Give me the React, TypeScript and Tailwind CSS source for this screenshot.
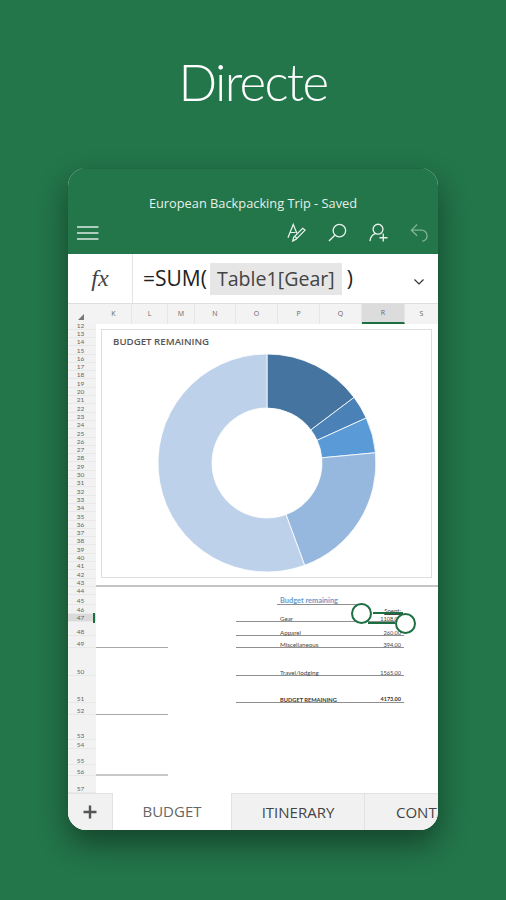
const SANS = "font-['Open_Sans',sans-serif]";

function polar(r: number, deg: number): string {
  const a = ((deg - 90) * Math.PI) / 180;
  return `${(110 + r * Math.cos(a)).toFixed(2)} ${(110 + r * Math.sin(a)).toFixed(2)}`;
}

function slicePath(from: number, to: number): string {
  const large = to - from > 180 ? 1 : 0;
  return `M${polar(109, from)} A109 109 0 ${large} 1 ${polar(109, to)} L${polar(55, to)} A55 55 0 ${large} 0 ${polar(55, from)} Z`;
}

const slices = [
  { from: 0, to: 53, color: "#44749f" },
  { from: 53, to: 65.6, color: "#4a81b7" },
  { from: 65.6, to: 84.6, color: "#5a9ad6" },
  { from: 84.6, to: 159.8, color: "#97b8de" },
  { from: 159.8, to: 360, color: "#bdd1ea" },
];

const columns = [
  { label: "K", w: "w-[36px]" },
  { label: "L", w: "w-[36px]" },
  { label: "M", w: "w-[27px]" },
  { label: "N", w: "w-[41px]" },
  { label: "O", w: "w-[42px]" },
  { label: "P", w: "w-[42px]" },
  { label: "Q", w: "w-[42px]" },
  { label: "R", w: "w-[43px]", selected: true },
  { label: "S", w: "w-[34px]" },
];

const chartRows = Array.from({ length: 32 }, (_, i) => String(i + 13));

const lowerRows = [
  { n: "45", h: "h-[10px]" },
  { n: "46", h: "h-[9px]" },
  { n: "47", h: "h-[8px]", selected: true },
  { n: "48", h: "h-[14px]" },
  { n: "49", h: "h-[12px]" },
  { n: "50", h: "h-[28px]" },
  { n: "51", h: "h-[27px]" },
  { n: "52", h: "h-[12px]" },
  { n: "53", h: "h-[25px]" },
  { n: "54", h: "h-[9px]" },
  { n: "55", h: "h-[16px]" },
  { n: "56", h: "h-[11px]" },
  { n: "57", h: "h-[17px]" },
];

function RowNumber({ n, h, selected }: { n: string; h: string; selected?: boolean }) {
  return (
    <div
      className={`${h} flex items-end justify-center border-b border-[#e8e8e8] pr-[3px] text-[6.5px] leading-[6px] text-[#666] ${
        selected ? "bg-[#dadada]" : "bg-[#f2f2f2]"
      }`}
    >
      {n}
    </div>
  );
}

function SheetRow({
  h,
  left,
  thick,
  label,
  value,
  bold,
}: {
  h: string;
  left?: boolean;
  thick?: boolean;
  label?: string;
  value?: string;
  bold?: boolean;
}) {
  return (
    <div className={`${h} flex shrink-0 font-['Lato',sans-serif] leading-[5px] text-[#444]`}>
      <div className={`w-[72px] ${left ? (thick ? "border-b-2 border-[#c8c8c8]" : "border-b border-[#a8a8a8]") : ""}`} />
      <div className="w-[68px]" />
      <div
        className={`flex w-[168px] items-end justify-between pr-[3px] pl-[44px] ${label ? "border-b border-[#8f8f8f]" : ""} ${
          bold ? "text-[5.7px] font-bold text-[#333]" : "text-[6.2px]"
        }`}
      >
        <span>{label}</span>
        <span className={bold ? "text-[5.5px]" : "text-[5.6px]"}>{value}</span>
      </div>
    </div>
  );
}

export default function App() {
  return (
    <div className={`flex min-h-[900px] flex-col items-center bg-[#23754a] ${SANS}`}>
      <h1 className="mt-[47px] font-['Lato',sans-serif] text-[51px] leading-[70px] font-light tracking-[-1.7px] text-white">Directe</h1>

      <div className="mt-[51px] flex h-[662px] w-[370px] flex-col overflow-hidden rounded-[18px] bg-white shadow-[0_14px_30px_rgba(0,0,0,0.42)]">
        <header className="flex h-[86px] shrink-0 flex-col border-t border-[#1d6a41] bg-[#23754a]">
          <div className="mt-[26px] text-center text-[12.8px] leading-[17px] text-[#e3f1e9]">
            European Backpacking Trip - Saved
          </div>
          <div className="mt-[11px] flex items-center pr-[9px] pl-[9px]">
            <svg width="22" height="16" viewBox="0 0 22 16" fill="none" stroke="#dcece3" strokeWidth="1.3">
              <path d="M0 2H21.5M0 8H21.5M0 14H21.5" />
            </svg>
            <div className="ml-auto flex items-center gap-[22px]">
              <svg width="19" height="19" viewBox="0 0 20 20" fill="none" stroke="#e8f3ed" strokeWidth="1.3">
                <path d="M1 15.5 6.6 1.5 10.5 11M3.3 10H9" />
                <path d="M16.5 5.5 19 7.5 9.6 17 6 19 7 15.2ZM8 14l2.5 2" />
              </svg>
              <svg width="19" height="19" viewBox="0 0 20 20" fill="none" stroke="#e8f3ed" strokeWidth="1.4">
                <circle cx="12" cy="8" r="6.6" />
                <path d="M7.2 12.8 1 19" />
              </svg>
              <svg width="19" height="19" viewBox="0 0 20 20" fill="none" stroke="#e8f3ed" strokeWidth="1.4">
                <circle cx="9.5" cy="6.5" r="5.2" />
                <path d="M1 19c.4-3.5 2.6-6.5 5.5-7.7M11 15.5h8.5M15 11v8.5" />
              </svg>
              <svg width="19" height="19" viewBox="0 0 20 20" fill="none" stroke="#7fb398" strokeWidth="1.4">
                <path d="M7.5 1.5 1.5 7.5 7.5 13.5M1.5 7.5H12a6 6 0 0 1 6 6c0 3-2 5.2-5 5.7" />
              </svg>
            </div>
          </div>
        </header>

        <div className="flex h-[50px] shrink-0 items-center border-b border-[#dedede] bg-white">
          <div className="flex h-full w-[65px] shrink-0 items-center justify-center border-r border-[#e4e4e4] pb-[2px] font-['Liberation_Serif',serif] text-[24px] text-[#444] italic">
            fx
          </div>
          <div className="ml-[10px] flex items-center text-[21px] text-[#222]">
            <span>=SUM(</span>
            <span className="mr-[5px] ml-[3px] flex h-[32px] items-center bg-[#e6e6e6] px-[7px] text-[19.6px] text-[#444]">Table1[Gear]</span>
            <span>)</span>
          </div>
          <svg className="mt-[6px] ml-auto mr-[14px]" width="10" height="6" viewBox="0 0 10 6" fill="none" stroke="#333" strokeWidth="1.2">
            <path d="M.5.5 5 5 9.5.5" />
          </svg>
        </div>

        <div className="flex h-[20px] shrink-0 bg-[#f3f3f3]">
          <div className="flex w-[28px] shrink-0 items-end justify-center pb-[4px] pr-[3px]">
            <svg width="6" height="6" viewBox="0 0 6 6" fill="#777">
              <path d="M6 0V6H0Z" />
            </svg>
          </div>
          {columns.map((c) => (
            <div
              key={c.label}
              className={`${c.w} flex shrink-0 items-center justify-center border-r border-[#e6e6e6] text-[7px] text-[#666] ${
                c.selected ? "border-b-2 border-b-[#1d6f42] bg-[#dcdcdc]" : ""
              }`}
            >
              {c.label}
            </div>
          ))}
        </div>

        <div className="relative flex min-h-0 flex-1 overflow-hidden">
          <div className={`flex w-[28px] shrink-0 flex-col font-['Lato',sans-serif]`}>
            <RowNumber n="12" h="h-[5.7px]" />
            {chartRows.map((n) => (
              <RowNumber key={n} n={n} h="h-[8.3px]" />
            ))}
            {lowerRows.map((r) => (
              <RowNumber key={r.n} n={r.n} h={r.h} selected={r.selected} />
            ))}
          </div>

          <div className="flex min-w-0 flex-1 flex-col bg-white">
            <div className="h-[263px] shrink-0 border-b-2 border-[#c4c4c4] px-[5px] pt-[5px] pr-[6px]">
              <div className="h-[249px] border border-[#dddddd]">
                <div className="pt-[5px] pl-[11px] text-[9.7px] leading-[14px] font-semibold text-[#555]">
                  BUDGET REMAINING
                </div>
                <svg className="mx-auto mt-[4px]" width="220" height="220" viewBox="0 0 220 220">
                  {slices.map((s) => (
                    <path key={s.color} d={slicePath(s.from, s.to)} fill={s.color} stroke="#ffffff" strokeWidth="0.8" />
                  ))}
                </svg>
              </div>
            </div>
            <div className="h-[8px] shrink-0" />
            <div className="flex h-[10px] shrink-0 font-['Lato',sans-serif]">
              <div className="ml-[181px] w-[88px] border-b border-[#8f8f8f] pt-[2px] pl-[3px] text-[7.4px] leading-[7px] font-bold text-[#6d9ac9]">
                Budget remaining
              </div>
            </div>
            <div className="flex h-[9px] shrink-0 items-end justify-end pr-[37px] font-['Lato',sans-serif] text-[6px] leading-[6px] text-[#444] underline">
              Spent:
            </div>
            <SheetRow h="h-[8px]" label="Gear" value="1108.00" />
            <SheetRow h="h-[14px]" label="Apparel" value="260.00" />
            <SheetRow h="h-[12px]" left label="Miscellaneous" value="394.00" />
            <SheetRow h="h-[28px]" label="Travel/lodging" value="1565.00" />
            <SheetRow h="h-[27px]" label="BUDGET REMAINING" value="4173.00" bold />
            <SheetRow h="h-[12px]" left />
            <SheetRow h="h-[25px]" />
            <SheetRow h="h-[9px]" />
            <SheetRow h="h-[16px]" />
            <SheetRow h="h-[11px]" left thick />
          </div>

          {/* selection handles over the grid */}
          <div className="absolute top-[289px] left-[25px] h-[10px] w-[2px] bg-[#1d6f42]" />
          <div className="absolute top-[288px] left-[305px] h-[2px] w-[30px] bg-[#1d6f42]" />
          <div className="absolute top-[298px] left-[300px] h-[2px] w-[27px] bg-[#1d6f42]" />
          <div className="absolute top-[278.5px] left-[282.5px] h-[21px] w-[21px] rounded-full border-2 border-[#1d6f42] bg-white" />
          <div className="absolute top-[288.5px] left-[326.5px] h-[21px] w-[21px] rounded-full border-2 border-[#1d6f42] bg-white" />
        </div>

        <div className="flex h-[37px] shrink-0 bg-[#f1f1f1] text-[15px] text-[#444]">
          <div className="flex w-[45px] shrink-0 items-center justify-center border-t border-r border-[#e2e2e2]">
            <svg width="14" height="14" viewBox="0 0 14 14" fill="none" stroke="#555" strokeWidth="2.4">
              <path d="M7 .5V13.5M.5 7H13.5" />
            </svg>
          </div>
          <div className="flex w-[118px] shrink-0 items-center justify-center bg-white text-[#666]">BUDGET</div>
          <div className="flex w-[134px] shrink-0 items-center justify-center border-t border-r border-l border-[#e2e2e2]">
            ITINERARY
          </div>
          <div className="flex min-w-0 flex-1 items-center overflow-hidden border-t border-[#e2e2e2] pl-[31px] whitespace-nowrap">
            CONTACTS
          </div>
        </div>
      </div>
    </div>
  );
}
